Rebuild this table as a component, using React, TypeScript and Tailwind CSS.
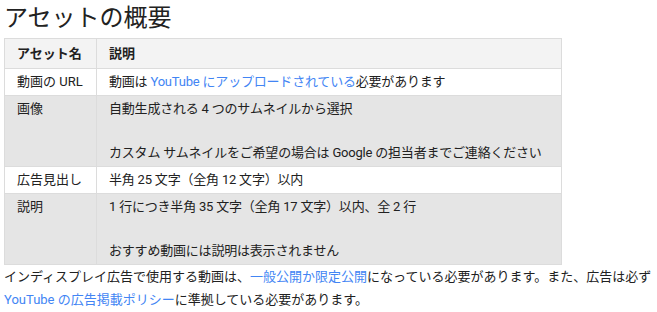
import React from 'react';

const Link: React.FC<{ children: React.ReactNode }> = ({ children }) => (
  <a href="#" className="text-[#4285f4] no-underline">
    {children}
  </a>
);

const App: React.FC = () => {
  const rows = [
    {
      name: '動画の URL',
      shaded: false,
      body: [
        <>
          動画は <Link>YouTube にアップロードされている</Link>必要があります
        </>,
      ],
    },
    {
      name: '画像',
      shaded: true,
      body: [
        '自動生成される 4 つのサムネイルから選択',
        'カスタム サムネイルをご希望の場合は Google の担当者までご連絡ください',
      ],
    },
    {
      name: '広告見出し',
      shaded: false,
      body: ['半角 25 文字（全角 12 文字）以内'],
    },
    {
      name: '説明',
      shaded: true,
      body: ['1 行につき半角 35 文字（全角 17 文字）以内、全 2 行', 'おすすめ動画には説明は表示されません'],
    },
  ];

  return (
    <div className="w-[657px] h-[312px] bg-white text-[#212121] font-['Roboto','Noto_Sans_CJK_JP',sans-serif] overflow-hidden">
      <h1 className="pl-[4px] pt-[3px] text-[24px] leading-[30px] font-normal text-[#222]">アセットの概要</h1>

      <table className="mt-[5px] ml-[4px] w-[558px] table-fixed border-collapse text-[13px] leading-[18px]">
        <thead>
          <tr className="bg-[#f3f3f3]">
            <th className="w-[92px] border border-[#dcdcdc] px-[12px] pt-[6px] pb-[5px] text-left font-bold">アセット名</th>
            <th className="border border-[#dcdcdc] px-[12px] pt-[6px] pb-[5px] text-left font-bold">説明</th>
          </tr>
        </thead>
        <tbody>
          {rows.map((row) => (
            <tr key={row.name} className={row.shaded ? 'bg-[#e5e5e5]' : 'bg-white'}>
              <td className="border border-[#dcdcdc] px-[12px] py-[4px] align-top whitespace-nowrap">{row.name}</td>
              <td className="border border-[#dcdcdc] pl-[12px] pr-0 py-[4px] align-top whitespace-nowrap tracking-[-0.2px]">
                <div className="flex flex-col gap-[26px]">
                  {row.body.map((line, i) => (
                    <p key={i}>{line}</p>
                  ))}
                </div>
              </td>
            </tr>
          ))}
        </tbody>
      </table>

      <p className="pl-[4px] text-[13px] leading-[23px]">
        インディスプレイ広告で使用する動画は、<Link>一般公開か限定公開</Link>になっている必要があります。また、広告は必ず
        <Link>YouTube の広告掲載ポリシー</Link>に準拠している必要があります。
      </p>
    </div>
  );
};

export default App;
